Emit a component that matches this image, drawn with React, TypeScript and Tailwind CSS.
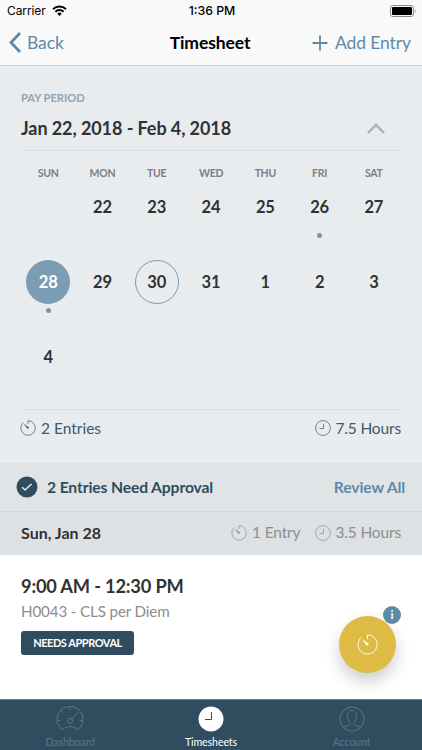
import React from 'react';

const DAY_NAMES = ['SUN', 'MON', 'TUE', 'WED', 'THU', 'FRI', 'SAT'];

type Day = { label: string; selected?: boolean; today?: boolean; dot?: boolean };

const DAYS: Day[] = [
    { label: '' },
    { label: '22' },
    { label: '23' },
    { label: '24' },
    { label: '25' },
    { label: '26', dot: true },
    { label: '27' },
    { label: '28', selected: true, dot: true },
    { label: '29' },
    { label: '30', today: true },
    { label: '31' },
    { label: '1' },
    { label: '2' },
    { label: '3' },
    { label: '4' },
];

const TimerIcon = ({ className }: { className?: string }) => (
    <svg viewBox="0 0 16 16" fill="none" stroke="currentColor" strokeLinecap="round" className={className}>
        <path d="M8 3.6V.7A7.3 7.3 0 1 1 2.9 2.8" strokeWidth=".7" />
        <path d="M4.5 4.5 8.5 7.3A.8.8 0 0 1 7.5 8.5Z" fill="currentColor" strokeWidth=".4" />
    </svg>
);

const ClockIcon = ({ className }: { className?: string }) => (
    <svg viewBox="0 0 16 16" fill="none" stroke="currentColor" strokeWidth=".7" className={className}>
        <circle cx="8" cy="8" r="7.4" />
        <path d="M8.5 3.7V8.5H4.5" />
    </svg>
);

const StatusBar = () => (
    <div className="flex h-[21px] items-center justify-between pl-[7px] pr-[5px] font-['Inter'] text-[12px] text-black">
        <div className="flex w-[120px] items-center gap-[6px]">
            <span className="tracking-[-0.1px]">Carrier</span>
            <svg viewBox="0 0 15 11" className="h-[11px] w-[15px]" fill="none" stroke="#000" strokeWidth="2">
                <path d="M1 4.1a9.3 9.3 0 0 1 13 0M3.4 6.7a5.8 5.8 0 0 1 8.2 0" />
                <path d="M7.5 11 5.3 8.7a3.1 3.1 0 0 1 4.4 0Z" fill="#000" stroke="none" />
            </svg>
        </div>
        <span className="pt-px text-[12.3px] font-medium">1:36 PM</span>
        <div className="flex w-[120px] justify-end">
            <svg viewBox="0 0 27 12" className="h-3 w-[27px]">
                <rect x=".5" y=".5" width="23" height="11" rx="2.4" fill="none" stroke="#8a8a8a" />
                <rect x="2" y="2" width="20" height="8" rx="1" fill="#000" />
                <path d="M25 4q1.6 2 0 4Z" fill="#8a8a8a" />
            </svg>
        </div>
    </div>
);

const NavBar = () => (
    <div className="flex h-[44px] items-center justify-between pl-[9px] pr-[11px] text-[17.5px] tracking-[-0.1px] text-[#5d8aa7]">
        <button className="flex w-[110px] items-center gap-[6px]">
            <svg viewBox="0 0 12 21" className="mb-px h-[21px] w-3" fill="none" stroke="currentColor" strokeWidth="2.8">
                <path d="M11 1 2 10.5 11 20" />
            </svg>
            Back
        </button>
        <h1 className="font-bold text-black">Timesheet</h1>
        <button className="flex w-[110px] items-center justify-end gap-[7px] whitespace-nowrap">
            <svg viewBox="0 0 16 16" className="size-4 shrink-0" fill="none" stroke="currentColor" strokeWidth="1.8">
                <path d="M8 .5v15M.5 8h15" />
            </svg>
            Add Entry
        </button>
    </div>
);

const DayCell = ({ day }: { day: Day }) => {
    let circle = 'text-[#303234]';
    if (day.selected) circle = 'bg-[#7a9db3] text-white';
    if (day.today) circle = 'border border-[#7a9db3] text-[#303234]';

    return (
        <div className="flex h-[75px] flex-col items-center">
            <div className={`flex size-[44px] shrink-0 items-center justify-center rounded-full text-[16.5px] font-bold tracking-[-0.2px] ${circle}`}>
                {day.label}
            </div>
            {day.dot && <div className="mt-[4px] size-[5px] rounded-full bg-[#8b8f93]" />}
        </div>
    );
};

const PayPeriod = () => (
    <section className="h-[397px] bg-[#e8ecef] px-[21px] pt-[24px]">
        <p className="text-[11.2px] leading-4 font-bold tracking-[-0.05px] text-[#94a3b0]">PAY PERIOD</p>
        <div className="mt-[9px] flex h-[27px] items-center justify-between pr-4">
            <h2 className="text-[18px] font-bold tracking-[-0.08px] text-[#303234]">Jan 22, 2018 - Feb 4, 2018</h2>
            <svg viewBox="0 0 18 11" className="h-[11px] w-[18px]" fill="none" stroke="#a6afb7" strokeWidth="2.3">
                <path d="M1 10 9 2l8 8" />
            </svg>
        </div>
        <div className="mt-[8px] border-t border-[#d9dde0]" />
        <div className="mt-[14px] grid grid-cols-7 text-center text-[10.5px] leading-4 font-bold tracking-[-0.3px] text-[#7b7f82]">
            {DAY_NAMES.map(name => <span key={name}>{name}</span>)}
        </div>
        <div className="mt-[4px] grid h-[224px] grid-cols-7">
            {DAYS.map((day, i) => <DayCell key={i} day={day} />)}
        </div>
        <div className="border-t border-[#d9dde0]" />
        <div className="mt-[7px] flex items-center justify-between text-[15.5px] leading-[22px] text-[#3e586a]">
            <span className="-ml-px flex items-center gap-[5px]"><TimerIcon className="size-4" />2 Entries</span>
            <span className="flex items-center gap-1 tracking-[-0.15px]"><ClockIcon className="size-4" />7.5 Hours</span>
        </div>
    </section>
);

const ApprovalBanner = () => (
    <div className="flex h-[48px] items-center bg-[#e1e4e7] pr-[17px] pl-4 text-[15.7px] font-bold tracking-[-0.13px]">
        <svg viewBox="0 0 22 22" className="size-[22px]">
            <circle cx="11" cy="11" r="10.5" fill="#2f4d5f" />
            <path d="m6.2 11.3 2.8 2.7 6.6-6" fill="none" stroke="#fff" strokeWidth="1.2" />
        </svg>
        <span className="ml-[9px] pt-[2px] text-[#2f4d5f]">2 Entries Need Approval</span>
        <button className="ml-auto pt-[2px] text-[#5d8aa7]">Review All</button>
    </div>
);

const DayHeader = () => (
    <div className="flex h-[44px] items-center border-t border-[#d5d9dc] bg-[#dee1e4] px-[21px] pb-px text-[15.5px] tracking-[-0.15px] text-[#8b8f92]">
        <h3 className="text-[16px] font-bold tracking-normal text-[#303234]">Sun, Jan 28</h3>
        <span className="ml-auto flex items-center gap-[5px]"><TimerIcon className="size-4" />1 Entry</span>
        <span className="ml-[15px] flex items-center gap-1"><ClockIcon className="size-4" />3.5 Hours</span>
    </div>
);

const EntryCard = () => (
    <div className="relative h-[144px] bg-white px-[21px] pt-[17px]">
        <h3 className="text-[18.3px] leading-7 font-bold tracking-[-0.2px] text-[#303234]">9:00 AM - 12:30 PM</h3>
        <p className="text-[15.2px] leading-[22px] tracking-[-0.15px] text-[#8d8d8d]">H0043 - CLS per Diem</p>
        <span className="mt-[9px] flex h-[24px] w-[113px] items-center justify-center rounded-[3px] bg-[#2f4d5f] text-[11px] font-bold tracking-[-0.45px] text-white">
            NEEDS APPROVAL
        </span>
        <button className="absolute top-[61px] left-[339px] flex size-[57px] items-center justify-center rounded-full bg-[#ddbb45] text-white shadow-[0_8px_16px_rgba(0,0,0,0.2)]">
            <TimerIcon className="size-[21px]" />
        </button>
        <span className="absolute top-[51px] left-[383px] flex size-[18px] items-center justify-center rounded-full bg-[#5d8aa7] text-[12px] font-bold text-white">
            i
        </span>
    </div>
);

const TabBar = () => (
    <nav className="grid h-[51px] grid-cols-3 border-t border-[#6f8492] bg-[#2f4d5f] text-[10.6px] leading-[14px] tracking-[-0.1px] text-[#54788e]">
        <div className="flex flex-col items-center pt-[6px]">
            <svg viewBox="0 0 28 26" className="h-[26px] w-7" fill="none" stroke="currentColor" strokeWidth="1">
                <path d="M6 23.5A13 13 0 1 1 22 23.5Q14 17.5 6 23.5Z" strokeLinejoin="round" />
                <circle cx="14" cy="14.8" r="2.5" />
                <path d="m15.8 13 6-6.4M14 1v3M5 5l2 2M1.2 14.5h3.300M23.5 14.5h3.300" />
            </svg>
            <span className="mt-[3px]">Dashboard</span>
        </div>
        <div className="flex flex-col items-center pt-[6px] text-white">
            <svg viewBox="0 0 26 26" className="size-[26px]">
                <circle cx="13" cy="13" r="12.5" fill="#fff" />
                <path d="M13.5 6v7.500H7" fill="none" stroke="#2f4d5f" />
            </svg>
            <span className="mt-[3px]">Timesheets</span>
        </div>
        <div className="flex flex-col items-center pt-[6px]">
            <svg viewBox="0 0 26 26" className="size-[26px]" fill="none" stroke="currentColor">
                <circle cx="13" cy="13" r="12" />
                <path d="M4.5 21.5c1.500-2 6.500-1.500 6.500-4 0-2-2.500-3-2.500-7.500C8.500 6 10 4.500 13 4.500s4.500 1.500 4.500 5.500C17.500 14.500 15 15.500 15 17.500c0 2.500 5 2 6.500 4" />
            </svg>
            <span className="mt-[3px]">Account</span>
        </div>
    </nav>
);

const App: React.FC = () => (
    <div className="h-[750px] w-[422px] overflow-hidden bg-white font-['Lato','Liberation_Sans',sans-serif]">
        <header className="h-[66px] border-b border-[#cfd3d6] bg-[#f9f9f9]">
            <StatusBar />
            <NavBar />
        </header>
        <PayPeriod />
        <ApprovalBanner />
        <DayHeader />
        <EntryCard />
        <TabBar />
    </div>
);

export default App;
